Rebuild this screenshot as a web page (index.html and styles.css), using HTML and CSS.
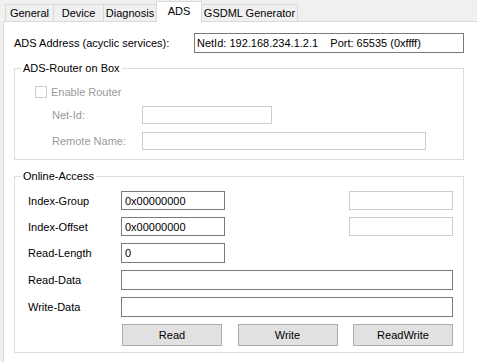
FILE: index.html
```html
<!DOCTYPE html>
<html lang="en">
<head>
    <meta charset="UTF-8">
    <title>ADS</title>
    <link rel="stylesheet" href="styles.css">
</head>
<body>
    <div class="tabs">
        <div class="tab tab-general">General</div>
        <div class="tab tab-device">Device</div>
        <div class="tab tab-diag">Diagnosis</div>
        <div class="tab tab-ads active">ADS</div>
        <div class="tab tab-gsdml">GSDML Generator</div>
    </div>

    <div class="panel">
        <div class="address">
            <span class="address-label">ADS Address (acyclic services):</span>
            <div class="address-box">NetId: 192.168.234.1.2.1&nbsp;&nbsp;&nbsp;&nbsp;Port: 65535 (0xffff)</div>
        </div>

        <fieldset class="group router">
            <legend>ADS-Router on Box</legend>
            <div class="router-body">
                <label class="check disabled"><span class="box"></span>Enable Router</label>
                <div class="router-grid">
                    <span class="disabled">Net-Id:</span>
                    <input type="text" class="field light netid" disabled>
                    <span class="disabled">Remote Name:</span>
                    <input type="text" class="field light remote" disabled>
                </div>
            </div>
        </fieldset>

        <fieldset class="group online">
            <legend>Online-Access</legend>
            <div class="online-grid">
                <span>Index-Group</span>
                <input type="text" class="field" value="0x00000000">
                <span></span>
                <input type="text" class="field light" disabled>

                <span>Index-Offset</span>
                <input type="text" class="field" value="0x00000000">
                <span></span>
                <input type="text" class="field light" disabled>

                <span>Read-Length</span>
                <input type="text" class="field" value="0">
                <span class="wide-empty"></span>

                <span>Read-Data</span>
                <input type="text" class="field wide">

                <span>Write-Data</span>
                <input type="text" class="field wide">

                <span></span>
                <div class="buttons">
                    <button>Read</button>
                    <button>Write</button>
                    <button>ReadWrite</button>
                </div>
            </div>
        </fieldset>
    </div>
</body>
</html>
```

FILE: styles.css
```css
* {
    box-sizing: border-box;
}
html, body {
    margin: 0;
    height: 100%;
}
body {
    background-color: #f0f0f0;
    font-family: "Liberation Sans", Arial, sans-serif;
    font-size: 11px;
    color: #000;
    overflow: hidden;
}
.tabs {
    display: flex;
    align-items: flex-end;
    height: 21px;
    padding-left: 5px;
}
.tab {
    height: 17px;
    line-height: 17px;
    text-align: center;
    white-space: nowrap;
    border: 1px solid #d9d9d9;
    border-bottom: none;
    border-left: none;
    background-color: #f0f0f0;
}
.tab-general {
    width: 49px;
    border-left: 1px solid #d9d9d9;
}
.tab-device {
    width: 50px;
}
.tab-diag {
    width: 53px;
}
.tab-ads {
    width: 46px;
}
.tab-gsdml {
    width: 96px;
}
.tab.active {
    height: 21px;
    line-height: 18px;
    background-color: #fff;
    border-left: 1px solid #d9d9d9;
    margin-left: -1px;
    margin-bottom: -1px;
    position: relative;
    z-index: 1;
}
.panel {
    margin-left: 3px;
    height: 341px;
    background-color: #fff;
    border-top: 1px solid #d9d9d9;
    border-left: 1px solid #d9d9d9;
    padding: 11px 0 0 10px;
}
.address {
    display: flex;
    align-items: center;
    height: 20px;
}
.address-label {
    width: 180px;
}
.address-box {
    width: 270px;
    height: 20px;
    border: 1px solid #7a7a7a;
    line-height: 18px;
    padding-left: 2px;
    white-space: nowrap;
}
.group {
    width: 450px;
    margin: 0;
    border: 1px solid #dcdcdc;
    padding: 0;
}
.group legend {
    margin-left: 6px;
    padding: 0 2px;
    line-height: 14px;
}
.router {
    margin-top: 8px;
    height: 99px;
}
.router-body {
    padding: 11px 0 0 20px;
}
.online {
    margin-top: 9px;
    height: 184px;
}
.disabled {
    color: #9a9a9a;
}
.check {
    display: flex;
    align-items: center;
    gap: 4px;
    height: 12px;
}
.check .box {
    width: 12px;
    height: 12px;
    border: 1px solid #cccccc;
    background-color: #fff;
}
.router-grid {
    display: grid;
    grid-template-columns: 90px auto;
    grid-template-rows: 18px 18px;
    row-gap: 8px;
    align-items: center;
    margin-top: 8px;
    padding-left: 17px;
}
.field {
    height: 20px;
    border: 1px solid #7a7a7a;
    background-color: #fff;
    font-family: inherit;
    font-size: 11px;
    padding: 0 3px;
    margin: 0;
    color: #000;
    outline: none;
}
.field.light {
    border-color: #cccccc;
}
.netid {
    width: 130px;
    height: 18px;
}
.remote {
    width: 284px;
    height: 18px;
}
.online-grid {
    display: grid;
    grid-template-columns: 93px 104px 124px 104px;
    grid-template-rows: 19px 19px 20px 20px 20px 22px;
    row-gap: 7px;
    align-items: center;
    padding: 8px 0 0 13px;
}
.online-grid .field {
    width: 100%;
    height: 100%;
}
.wide-empty {
    grid-column: span 2;
}
.wide {
    grid-column: 2 / span 3;
}
.buttons {
    grid-column: 2 / span 3;
    display: flex;
    justify-content: space-between;
    padding-left: 1px;
    height: 22px;
}
button {
    width: 100px;
    height: 22px;
    border: 1px solid #adadad;
    background-color: #e1e1e1;
    font-family: inherit;
    font-size: 11px;
    color: #000;
    padding: 0;
}
```
